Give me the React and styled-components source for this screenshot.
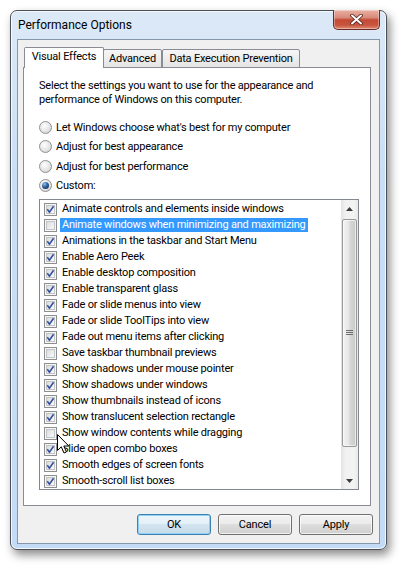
import React from 'react'
import styled, { createGlobalStyle } from 'styled-components'

const GlobalStyle = createGlobalStyle`
  html, body {
    margin: 0;
    padding: 0;
    background: #fff;
  }
  body {
    font-family: Roboto, "Noto Sans", sans-serif;
    font-size: 11px;
    letter-spacing: -0.2px;
    color: #000;
  }
`

const Page = styled.div`
  width: 405px;
  height: 569px;
  box-sizing: border-box;
  padding: 10px 0 0 10px;
`

const Frame = styled.div`
  width: 377px;
  height: 540px;
  box-sizing: border-box;
  border: 1px solid #4b5058;
  border-radius: 7px;
  background: linear-gradient(#dce9f7, #cadff6 30%, #c3dbf6);
  box-shadow: inset 0 0 0 1px rgba(255, 255, 255, 0.8), 3px 5px 10px rgba(0, 0, 0, 0.45);
  padding: 0 6px 5px 6px;
  display: flex;
  flex-direction: column;
`

const TitleBar = styled.div`
  height: 28px;
  display: flex;
  align-items: flex-start;
`

const Title = styled.div`
  margin: 6px 0 0 1px;
  font-size: 12px;
  letter-spacing: 0;
  line-height: 16px;
`

const CloseButton = styled.div`
  margin-left: auto;
  margin-top: -1px;
  width: 47px;
  height: 20px;
  box-sizing: border-box;
  border: 1px solid #6b2a22;
  border-top: none;
  border-radius: 0 0 5px 5px;
  background: linear-gradient(#eab0a3, #d98a7a 40%, #c44a36 52%, #c9563f 80%, #dc8f78);
  box-shadow: inset 0 0 0 1px rgba(255, 255, 255, 0.35);
  display: flex;
  align-items: center;
  justify-content: center;
`

const Client = styled.div`
  flex: 1;
  border: 1px solid #8497ab;
  background: #f0f0f0;
  padding: 7px 8px 0 5px;
  display: flex;
  flex-direction: column;
`

const TabRow = styled.div`
  height: 21px;
  display: flex;
  align-items: flex-end;
  margin-bottom: -1px;
  padding-left: 1px;
  position: relative;
  z-index: 1;
`

const Tab = styled.div`
  box-sizing: border-box;
  width: ${p => p.$w}px;
  height: ${p => (p.$active ? 21 : 19)}px;
  margin-left: ${p => p.$ml || 0}px;
  border: 1px solid #898c95;
  border-bottom: ${p => (p.$active ? 'none' : '1px solid #898c95')};
  border-radius: 2px 2px 0 0;
  background: ${p => (p.$active ? '#fff' : 'linear-gradient(#f6f6f6, #e4e4e4)')};
  display: flex;
  justify-content: center;
  align-items: center;
  padding-bottom: ${p => (p.$active ? 2 : 0)}px;
  line-height: 16px;
  white-space: nowrap;
`

const Panel = styled.div`
  height: 439px;
  box-sizing: border-box;
  border: 1px solid #898c95;
  background: #fff;
  padding: 11px 11px 0 15px;
  display: flex;
  flex-direction: column;
`

const Description = styled.div`
  line-height: 14px;
  white-space: nowrap;
`

const RadioGroup = styled.div`
  margin-top: 10.5px;
  display: flex;
  flex-direction: column;
`

const RadioRow = styled.div`
  height: 19.5px;
  display: flex;
  align-items: center;
  gap: 4px;
`

const RadioCircle = styled.div`
  width: 13px;
  height: 13px;
  box-sizing: border-box;
  border-radius: 50%;
  border: 1px solid #8e8f8f;
  background: radial-gradient(circle at 40% 35%, #ffffff, #e2e2e2 60%, #c8c8c8);
  display: flex;
  align-items: center;
  justify-content: center;
`

const RadioDot = styled.div`
  width: 7px;
  height: 7px;
  border-radius: 50%;
  background: radial-gradient(circle at 35% 30%, #8ec3f1, #2a5690 50%, #0c244c);
`

const List = styled.div`
  margin: 3.5px 0 0 0;
  width: 320px;
  height: 291px;
  box-sizing: border-box;
  border: 1px solid #828790;
  display: flex;
  position: relative;
`

const Items = styled.div`
  flex: 1;
  min-width: 0;
  overflow: hidden;
  padding: 1px 0 0 4px;
`

const Item = styled.div`
  height: 16px;
  display: flex;
  align-items: center;
`

const Box = styled.div`
  width: 13px;
  height: 13px;
  box-sizing: border-box;
  border: 1px solid #8e8f8f;
  background: linear-gradient(135deg, #d3d5d8, #f3f3f3 70%, #fdfdfd);
  box-shadow: inset 0 0 0 1px #f6f6f6, inset 0 0 0 2px #c2c5ca;
  position: relative;
  flex-shrink: 0;
`

const Label = styled.span`
  margin-left: 3px;
  padding: 0 2px;
  line-height: 14px;
  white-space: nowrap;
  background: ${p => (p.$selected ? '#3399ff' : 'transparent')};
  color: ${p => (p.$selected ? '#fff' : '#000')};
`

const ScrollBar = styled.div`
  width: 17px;
  flex-shrink: 0;
  display: flex;
  flex-direction: column;
  background: linear-gradient(to right, #e2e2e2, #f1f1f1 25%, #f3f3f3 75%, #e9e9e9);
`

const ScrollButton = styled.div`
  height: 17px;
  display: flex;
  align-items: center;
  justify-content: center;
`

const Track = styled.div`
  flex: 1;
  padding-top: 2px;
`

const Thumb = styled.div`
  margin: 0 1px;
  height: 228px;
  box-sizing: border-box;
  border: 1px solid #989898;
  border-radius: 2px;
  background: linear-gradient(to right, #f4f4f4, #e6e6e6 45%, #d6d6d6 55%, #cacaca);
  box-shadow: inset 0 0 0 1px rgba(255, 255, 255, 0.6);
  display: flex;
  align-items: center;
  justify-content: center;
`

const Cursor = styled.svg`
  position: absolute;
  left: 17px;
  top: 234px;
`

const ButtonRow = styled.div`
  margin: 8px -2px 0 0;
  display: flex;
  justify-content: flex-end;
  gap: 7px;
`

const Button = styled.div`
  width: 74px;
  height: 21px;
  box-sizing: border-box;
  border: 1px solid ${p => (p.$default ? '#3c7fb1' : '#707070')};
  border-radius: 3px;
  background: ${p =>
    p.$default
      ? 'linear-gradient(#eef6fb, #e3eef6 50%, #d2e4ef 50%, #c7dbe8)'
      : 'linear-gradient(#f2f2f2, #ebebeb 50%, #dddddd 50%, #cfcfcf)'};
  box-shadow: inset 0 0 0 1px ${p => (p.$default ? '#8fd2f5' : 'rgba(255,255,255,0.7)')};
  display: flex;
  align-items: center;
  justify-content: center;
  line-height: 16px;
`

const effects = [
  ['Animate controls and elements inside windows', true],
  ['Animate windows when minimizing and maximizing', false, true],
  ['Animations in the taskbar and Start Menu', true],
  ['Enable Aero Peek', true],
  ['Enable desktop composition', true],
  ['Enable transparent glass', true],
  ['Fade or slide menus into view', true],
  ['Fade or slide ToolTips into view', true],
  ['Fade out menu items after clicking', true],
  ['Save taskbar thumbnail previews', false],
  ['Show shadows under mouse pointer', true],
  ['Show shadows under windows', true],
  ['Show thumbnails instead of icons', true],
  ['Show translucent selection rectangle', true],
  ['Show window contents while dragging', false],
  ['Slide open combo boxes', true],
  ['Smooth edges of screen fonts', true],
  ['Smooth-scroll list boxes', true],
]

const radios = [
  "Let Windows choose what's best for my computer",
  'Adjust for best appearance',
  'Adjust for best performance',
  'Custom:',
]

function Check() {
  return (
    <svg width="11" height="11" viewBox="0 0 11 11" style={{ position: 'absolute', left: 0, top: 0 }}>
      <path d="M2.3 5.3 L4.4 8.2 L8.6 2.2" fill="none" stroke="#34509a" strokeWidth="1.6" />
    </svg>
  )
}

function App() {
  return (
    <Page>
      <GlobalStyle />
      <Frame>
        <TitleBar>
          <Title>Performance Options</Title>
          <CloseButton>
            <svg width="13" height="11" viewBox="0 0 13 11">
              <path d="M2 1.5 L11 9.5 M11 1.5 L2 9.5" stroke="#4a1f18" strokeWidth="3.6" strokeLinecap="round" />
              <path d="M2 1.5 L11 9.5 M11 1.5 L2 9.5" stroke="#fff" strokeWidth="2" strokeLinecap="round" />
            </svg>
          </CloseButton>
        </TitleBar>
        <Client>
          <TabRow>
            <Tab $active $w={80}>Visual Effects</Tab>
            <Tab $w={59} $ml={-1}>Advanced</Tab>
            <Tab $w={138}>Data Execution Prevention</Tab>
          </TabRow>
          <Panel>
            <Description>
              Select the settings you want to use for the appearance and
              <br />
              performance of Windows on this computer.
            </Description>
            <RadioGroup>
              {radios.map((r, i) => (
                <RadioRow key={r}>
                  <RadioCircle>{i === 3 && <RadioDot />}</RadioCircle>
                  {r}
                </RadioRow>
              ))}
            </RadioGroup>
            <List>
              <Items>
                {effects.map(([text, on, sel]) => (
                  <Item key={text}>
                    <Box>{on && <Check />}</Box>
                    <Label $selected={sel}>{text}</Label>
                  </Item>
                ))}
              </Items>
              <ScrollBar>
                <ScrollButton>
                  <svg width="7" height="4" viewBox="0 0 7 4">
                    <path d="M0 4 L3.5 0 L7 4 Z" fill="#3c3c3c" />
                  </svg>
                </ScrollButton>
                <Track>
                  <Thumb>
                    <svg width="7" height="6" viewBox="0 0 7 6">
                      <path d="M0 0.5 H7 M0 2.5 H7 M0 4.5 H7" stroke="#6d6d6d" strokeWidth="1" />
                    </svg>
                  </Thumb>
                </Track>
                <ScrollButton>
                  <svg width="7" height="4" viewBox="0 0 7 4">
                    <path d="M0 0 L7 0 L3.5 4 Z" fill="#3c3c3c" />
                  </svg>
                </ScrollButton>
              </ScrollBar>
              <Cursor width="13" height="21" viewBox="0 0 13 21">
                <path
                  d="M0.5 0.5 L0.5 16.5 L4.3 12.8 L7 19 L9.4 18 L6.8 12 L11.8 12 Z"
                  fill="#fff"
                  stroke="#000"
                  strokeWidth="1"
                  strokeLinejoin="round"
                />
              </Cursor>
            </List>
          </Panel>
          <ButtonRow>
            <Button $default>OK</Button>
            <Button>Cancel</Button>
            <Button>Apply</Button>
          </ButtonRow>
        </Client>
      </Frame>
    </Page>
  )
}

export default App
